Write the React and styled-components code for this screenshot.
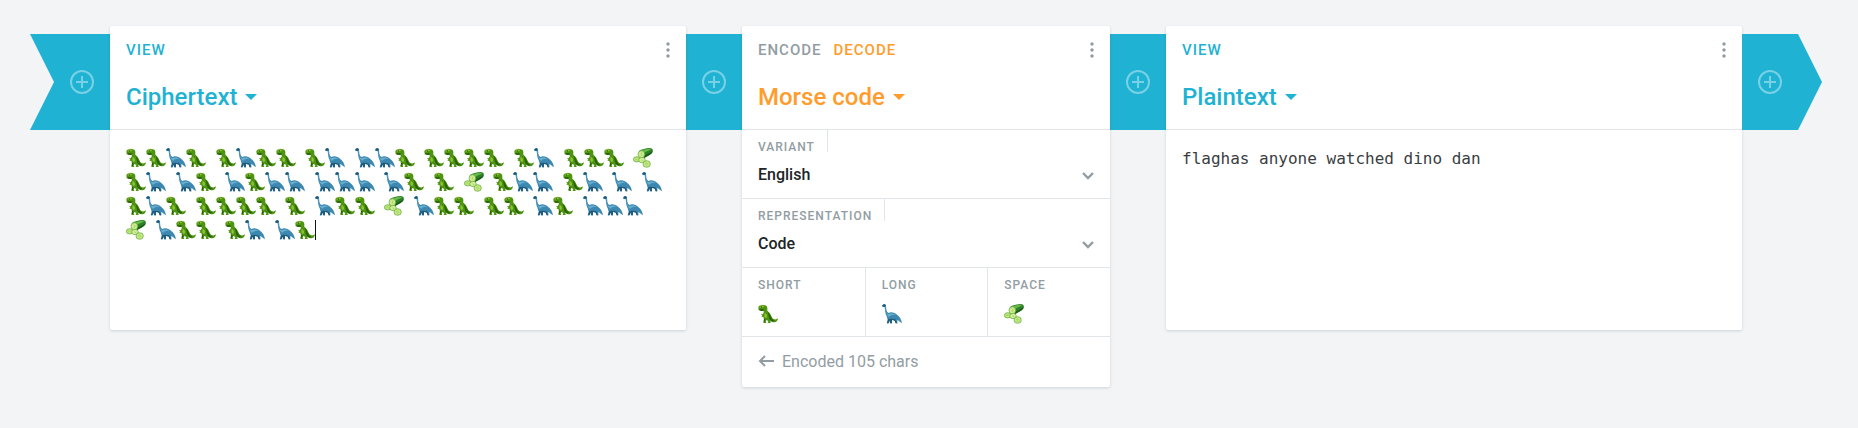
import React from "react";
import styled, { createGlobalStyle } from "styled-components";

const BLUE = "#1fb2d3";
const ORANGE = "#ff9c2b";
const GREY = "#929da3";
const LINE = "#e3e6e8";

const GlobalStyle = createGlobalStyle`
  *, *::before, *::after { box-sizing: border-box; }
  body {
    margin: 0;
    background: #f2f4f6;
    font-family: Roboto, "Liberation Sans", sans-serif;
    color: #212425;
  }
  button, select, textarea {
    margin: 0;
    padding: 0;
    border: 0;
    background: none;
    font: inherit;
    color: inherit;
  }
  button, select { cursor: pointer; }
`;

const Pipeline = styled.main`
  display: flex;
  align-items: flex-start;
  padding: 26px 36px 32px 30px;
`;

const Connector = styled.div`
  flex: none;
  display: flex;
  align-items: center;
  justify-content: center;
  width: ${(p) => (p.$end ? 80 : 56)}px;
  height: 96px;
  margin-top: 8px;
  background: ${BLUE};
  ${(p) =>
    p.$end === "tail" &&
    "padding-left: 24px; clip-path: polygon(0 0, 100% 0, 100% 100%, 0 100%, 24px 50%);"}
  ${(p) =>
    p.$end === "head" &&
    "padding-right: 24px; clip-path: polygon(0 0, calc(100% - 24px) 0, 100% 50%, calc(100% - 24px) 100%, 0 100%);"}
`;

const AddButton = styled.button`
  display: flex;
  color: #79d1e5;
`;

const Card = styled.section`
  position: relative;
  display: flex;
  flex-direction: column;
  flex: ${(p) => p.$grow} 1 0;
  min-width: 0;
  background: #fff;
  border-radius: 2px;
  box-shadow: 0 1px 3px rgba(30, 50, 60, 0.16);
`;

const CardHeader = styled.header`
  padding: 12px 16px 0;
  height: 104px;
  border-bottom: 1px solid ${LINE};
`;

const HeaderRow = styled.div`
  display: flex;
  align-items: center;
  justify-content: space-between;
  height: 24px;
`;

const Modes = styled.div`
  display: flex;
  gap: 12px;
`;

const Mode = styled.button`
  font-size: 15px;
  line-height: 24px;
  font-weight: 500;
  letter-spacing: 1px;
  text-transform: uppercase;
  color: ${(p) => p.$color};
`;

const MenuButton = styled.button`
  display: flex;
  color: ${GREY};
`;

const Heading = styled.h2`
  margin: 19px 0 0;
  font-size: 24px;
  line-height: 32px;
  font-weight: 500;
  color: ${(p) => p.$color};
`;

const TitleButton = styled.button`
  display: flex;
  align-items: center;
  gap: 8px;
`;

const CipherText = styled.div`
  min-height: 200px;
  padding: 16px;
  font-family: "Liberation Mono", monospace;
  font-size: 16px;
  line-height: 24px;
  outline: none;
`;

const PlainText = styled.textarea`
  display: block;
  width: 100%;
  height: 200px;
  padding: 17px 16px;
  resize: none;
  outline: none;
  font-family: "DejaVu Sans Mono", monospace;
  font-size: 16px;
  line-height: 24px;
  color: #3a3d3f;
`;

const Glyph = styled.svg`
  display: inline-block;
  width: 20px;
  height: 24px;
  vertical-align: top;
`;

const Caret = styled.span`
  display: inline-block;
  width: 1px;
  height: 20px;
  margin-top: 2px;
  vertical-align: top;
  background: #111;
`;

const Field = styled.div`
  position: relative;
  height: 69px;
  border-bottom: 1px solid ${LINE};
`;

const FieldLabel = styled.label`
  display: inline-block;
  height: 22px;
  padding: 10px 12px 0 16px;
  font-size: 12px;
  line-height: 14px;
  font-weight: 500;
  letter-spacing: 1px;
  text-transform: uppercase;
  vertical-align: top;
  color: ${GREY};
  border-right: 1px solid ${(p) => (p.$ruled ? LINE : "transparent")};
`;

const Select = styled.select`
  display: block;
  width: 100%;
  height: 44px;
  padding: 0 16px 0 16px;
  appearance: none;
  outline: none;
  font-size: 16px;
  font-weight: 500;
`;

const Chevron = styled.svg`
  position: absolute;
  right: 15px;
  bottom: 17px;
  pointer-events: none;
`;

const SymbolRow = styled.div`
  display: grid;
  grid-template-columns: repeat(3, 1fr);
`;

const SymbolField = styled(Field)`
  & + & { border-left: 1px solid ${LINE}; }
`;

const SymbolValue = styled.div`
  display: flex;
  padding: 12px 16px 0;
  outline: none;
`;

const Status = styled.button`
  display: flex;
  align-items: center;
  gap: 8px;
  height: 50px;
  padding: 0 16px 2px;
  font-size: 16px;
  color: ${GREY};
`;

const Rex = () => (
  <Glyph viewBox="0 -6 60 72" role="img" aria-label="T-Rex">
    <path
      fill="#4d9410"
      d="M1 10C2 5 8 3 14 3C22 2 28 6 28 12L28 20C34 24 38 30 41 38C44 46 53 49 60 43C59 53 51 58 42 53L37 50L38 57L29 57L31 51L25 48L23 52L25 57L16 57L18 47L16 38L10 39L13 35L9 29L14 31L17 26L17 20L9 21L2 19Z"
    />
    <path fill="#8dc336" d="M5 8C9 4 15 4 19 7L15 10L5 12ZM20 27C25 28 28 34 27 40L22 42L19 36Z" />
    <path fill="#2c6108" d="M3 16L16 15L18 20L9 21ZM29 23C36 30 38 38 42 46L50 51L42 53L34 45ZM18 44L23 46L21 53L17 54Z" />
    <path fill="#d5dd55" d="M9 4L12 1L15 3Z" />
    <circle cx="10" cy="9" r="2" fill="#24430a" />
  </Glyph>
);

const Sauropod = () => (
  <Glyph viewBox="0 -6 60 72" role="img" aria-label="Sauropod">
    <path
      fill="#3d88b0"
      d="M1 5C2 0 11 -1 12 5C13 14 12 22 19 27C27 23 38 25 46 33C53 38 58 46 60 58C55 55 52 51 46 48L46 58L41 58L38 49L31 47L29 50L30 58L24 58L23 50L20 58L14 58L17 47L14 37C9 28 9 17 8 9L2 9Z"
    />
    <path fill="#69afd0" d="M10 8C10 18 12 27 18 31C26 27 36 28 43 34C34 31 26 33 21 39C12 30 10 19 8 9Z" />
    <path fill="#205b7b" d="M1 4L7 0L12 4L8 8L2 8ZM19 45L30 44L40 46L46 58L41 58L38 50L30 48L30 58L25 58L23 49L19 58L15 58Z" />
  </Glyph>
);

const Cucumber = () => (
  <Glyph viewBox="0 -6 60 72" role="img" aria-label="Cucumber">
    <path fill="#2f8129" d="M18 9C26 4 38 1 50 0C58 0 61 5 59 10C58 16 52 20 45 23L32 31L20 22Z" />
    <path fill="#67bb49" d="M23 8C34 4 44 2 53 2C54 5 50 7 44 9L31 15Z" />
    <path fill="#195c19" d="M34 23C44 18 53 14 59 9C59 15 54 19 46 23L32 31Z" />
    <g stroke="#5aa636" strokeWidth="2">
      <ellipse cx="25" cy="19" rx="10" ry="11" fill="#cdeb8c" />
      <ellipse cx="11" cy="34" rx="10" ry="8" fill="#bce47b" />
      <ellipse cx="27" cy="36" rx="10" ry="8" fill="#d4ef99" />
      <ellipse cx="41" cy="48" rx="11" ry="10" fill="#c5e984" />
    </g>
    <path stroke="#8fca58" strokeWidth="2" fill="none" d="M24 14L27 18L24 24M7 34L13 33M24 35L30 38M36 47L41 45L46 49M38 51L43 51" />
  </Glyph>
);

const GLYPHS = { S: Rex, L: Sauropod, C: Cucumber };

const CIPHERTEXT =
  "SSLS SLSS SL LLS SSSS SL SSS C SL LS LSLL LLL LS S C SLL SL L LSLS SSSS S LSS C LSS SS LS LLL C LSS SL LS";

const Add = () => (
  <AddButton type="button" aria-label="Add brick">
    <svg width="24" height="24" viewBox="0 0 24 24" fill="none" stroke="currentColor" strokeWidth="2">
      <circle cx="12" cy="12" r="11" />
      <path d="M12 6V18M6 12H18" />
    </svg>
  </AddButton>
);

const Header = ({ modes, title, color }) => (
  <CardHeader>
    <HeaderRow>
      <Modes>
        {modes.map((m) => (
          <Mode key={m.name} type="button" $color={m.active ? color : GREY}>
            {m.name}
          </Mode>
        ))}
      </Modes>
      <MenuButton type="button" aria-label="Menu">
        <svg width="4" height="16" viewBox="0 0 4 16" fill="currentColor">
          <circle cx="2" cy="2" r="1.75" />
          <circle cx="2" cy="8" r="1.75" />
          <circle cx="2" cy="14" r="1.75" />
        </svg>
      </MenuButton>
    </HeaderRow>
    <Heading $color={color}>
      <TitleButton type="button">
        {title}
        <svg width="12" height="6" viewBox="0 0 12 6" fill="currentColor">
          <path d="M0 0H12L6 6Z" />
        </svg>
      </TitleButton>
    </Heading>
  </CardHeader>
);

const SelectField = ({ id, label, value }) => (
  <Field>
    <FieldLabel htmlFor={id} $ruled>
      {label}
    </FieldLabel>
    <Select id={id} defaultValue={value}>
      <option>{value}</option>
    </Select>
    <Chevron width="14" height="10" viewBox="0 0 14 10" fill="none" stroke={GREY} strokeWidth="2.4">
      <path d="M2 2L7 7L12 2" />
    </Chevron>
  </Field>
);

const SymbolInput = ({ id, label, children }) => (
  <SymbolField>
    <FieldLabel as="span" id={id}>
      {label}
    </FieldLabel>
    <SymbolValue role="textbox" tabIndex={0} aria-labelledby={id}>
      {children}
    </SymbolValue>
  </SymbolField>
);

export default function App() {
  return (
    <>
      <GlobalStyle />
      <Pipeline>
        <Connector $end="tail">
          <Add />
        </Connector>
        <Card $grow={576}>
          <Header modes={[{ name: "View", active: true }]} title="Ciphertext" color={BLUE} />
          <CipherText role="textbox" aria-multiline="true" aria-label="Ciphertext" tabIndex={0}>
            {[...CIPHERTEXT].map((c, i) => {
              const Symbol = GLYPHS[c];
              return Symbol ? <Symbol key={i} /> : " ";
            })}
            <Caret />
          </CipherText>
        </Card>
        <Connector>
          <Add />
        </Connector>
        <Card $grow={368}>
          <Header
            modes={[{ name: "Encode" }, { name: "Decode", active: true }]}
            title="Morse code"
            color={ORANGE}
          />
          <SelectField id="variant" label="Variant" value="English" />
          <SelectField id="representation" label="Representation" value="Code" />
          <SymbolRow>
            <SymbolInput id="short" label="Short">
              <Rex />
            </SymbolInput>
            <SymbolInput id="long" label="Long">
              <Sauropod />
            </SymbolInput>
            <SymbolInput id="space" label="Space">
              <Cucumber />
            </SymbolInput>
          </SymbolRow>
          <Status type="button">
            <svg width="16" height="12" viewBox="0 0 16 12" fill="none" stroke="currentColor" strokeWidth="2">
              <path d="M16 6H2M7 1L2 6L7 11" />
            </svg>
            Encoded 105 chars
          </Status>
        </Card>
        <Connector>
          <Add />
        </Connector>
        <Card $grow={576}>
          <Header modes={[{ name: "View", active: true }]} title="Plaintext" color={BLUE} />
          <PlainText aria-label="Plaintext" defaultValue="flaghas anyone watched dino dan" spellCheck={false} />
        </Card>
        <Connector $end="head">
          <Add />
        </Connector>
      </Pipeline>
    </>
  );
}
